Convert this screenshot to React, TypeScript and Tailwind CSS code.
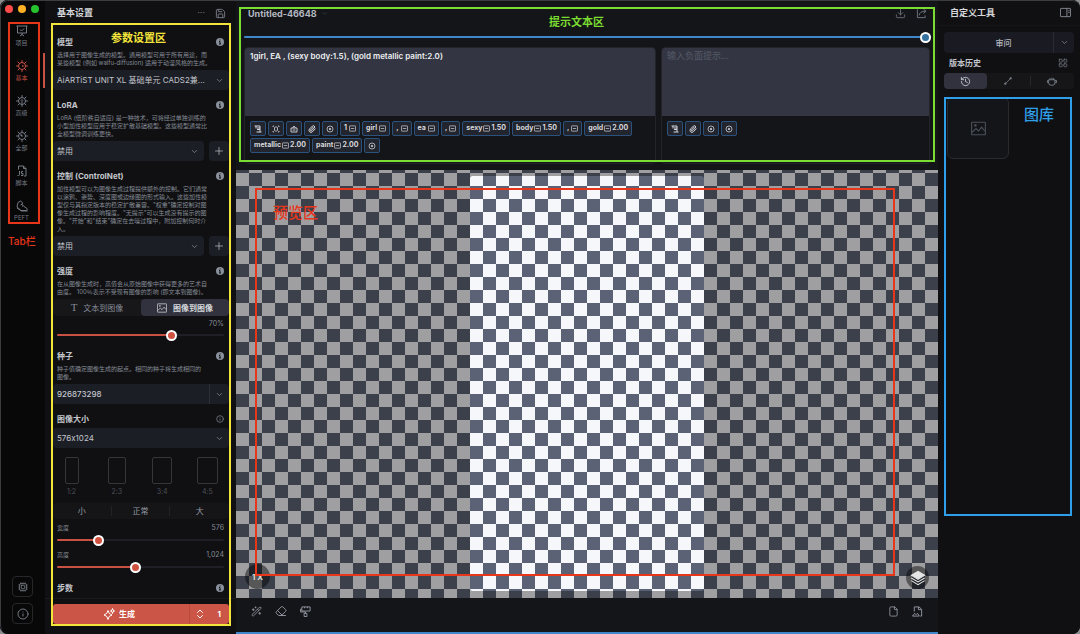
import { useState } from "react";
import type { ReactNode } from "react";
import clsx from "clsx";
import {
  ChevronDown,
  ChevronsUpDown,
  Cpu,
  Download,
  Eraser,
  File,
  History,
  Info,
  LayoutGrid,
  Paperclip,
  Plus,
  Save,
  WandSparkles,
} from "lucide-react";

const ProjectIcon = () => (
  <svg viewBox="0 0 24 24" className="h-3 w-3" fill="none" stroke="currentColor" strokeWidth="2">
    <path d="M1 2h22M3 2v14h18V2M8 9l3 3 5-5M12 16v4M8 22l4-3 4 3" />
  </svg>
);

const GearIcon = ({ children }: { children?: ReactNode }) => (
  <svg viewBox="0 0 24 24" className="h-3 w-3" fill="none" stroke="currentColor" strokeWidth="2">
    <circle cx="12" cy="12" r="7" />
    <path
      d="M12 5V1M12 23v-4M5 12H1M23 12h-4M7 7 4 4M20 20l-3-3M7 17l-3 3M20 4l-3 3"
      strokeLinecap="round"
    />
    {children}
  </svg>
);

const ScriptIcon = () => (
  <svg viewBox="0 0 24 24" className="h-3 w-3" fill="none" stroke="currentColor" strokeWidth="2">
    <path d="M5 9V2h10l5 5v15h-4M15 2v5h5" />
    <path d="M7 12v7q0 2-2 2H3M14 13h-3v4h3v4h-4" />
  </svg>
);

const ShoeIcon = () => (
  <svg viewBox="0 0 24 24" className="h-3 w-3" fill="none" stroke="currentColor" strokeWidth="2">
    <path d="M2 14 4 5l5-3 4 3-1 4 4 4 5 3q2 2 1 5H10Z" />
    <path d="m2 16 9 6h12M9 10l4-2M12 13l3-2" />
  </svg>
);

const PictureIcon = ({ className }: { className?: string }) => (
  <svg viewBox="0 0 24 24" className={className} fill="none" stroke="currentColor" strokeWidth="1.8">
    <rect x="1" y="2" width="22" height="20" rx="1" />
    <path d="m2 18 6-6 4 4 5-6 5 6" />
    <circle cx="7" cy="7" r="1.2" />
  </svg>
);

const SparkIcon = () => (
  <svg viewBox="0 0 24 24" className="h-3 w-3" fill="none" stroke="currentColor" strokeWidth="2">
    <path d="M10 5q1 7 8 9-7 1-8 9-1-8-8-9 7-2 8-9Z" />
    <path d="M19 1q0 4 4 5-4 0-4 5 0-5-4-5 4-1 4-5Z" />
  </svg>
);

const ShareIcon = () => (
  <svg viewBox="0 0 24 24" className="h-[11px] w-[11px]" fill="none" stroke="currentColor" strokeWidth="2">
    <path d="M3 3v18h17v-5M7 16q1-9 13-9M16 2l6 5-6 5" />
  </svg>
);

const PanelIcon = () => (
  <svg viewBox="0 0 24 24" className="h-[11px] w-[11px]" fill="none" stroke="currentColor" strokeWidth="2">
    <rect x="1" y="3" width="22" height="18" rx="1" />
    <path d="M15 3v18M18 8h3M18 12h3" />
  </svg>
);

const BrushIcon = () => (
  <svg viewBox="0 0 24 24" className="h-[11px] w-[11px]" fill="none" stroke="currentColor" strokeWidth="2">
    <path d="M4 2h18v9H4ZM4 7H1v6h11v3M9 16h6v7H9ZM10 2v3M16 2v3" />
  </svg>
);

const FilePictureIcon = () => (
  <svg viewBox="0 0 24 24" className="h-[11px] w-[11px]" fill="none" stroke="currentColor" strokeWidth="2">
    <path d="M5 12V2h10l6 5v15h-3M14 2v6h6" />
    <path d="m1 22 5-6 3 3 3-3 4 6Z" />
  </svg>
);

const LayersIcon = () => (
  <svg viewBox="0 0 24 24" className="h-4 w-4" fill="none" stroke="#e5e5e5" strokeWidth="1.6">
    <path d="M12 2 2 8l10 6 10-6Z" fill="#e5e5e5" />
    <path d="m2 12 10 6 10-6M2 16l10 6 10-6" />
  </svg>
);

const PathIcon = () => (
  <svg viewBox="0 0 24 24" className="h-2 w-2" fill="currentColor" stroke="currentColor" strokeWidth="2.5">
    <path d="M5 19 19 5" />
    <circle cx="4" cy="20" r="2.5" />
    <circle cx="20" cy="4" r="2.5" />
  </svg>
);

const CupIcon = () => (
  <svg viewBox="0 0 24 24" className="h-[10px] w-[10px]" fill="none" stroke="currentColor" strokeWidth="2.4">
    <path d="M4 9h15v7q0 6-5 6H9q-5 0-5-6ZM4 11H1v5h3M19 11h4v5h-4M7 9V5M12 9V4M16 9V5" />
  </svg>
);

const InfoDot = () => (
  <svg viewBox="0 0 16 16" className="h-2 w-2">
    <circle cx="8" cy="8" r="8" fill="#8a909c" />
    <path d="M8 3v2M6 7h2v5M6 12h4" stroke="#101012" strokeWidth="2" fill="none" />
  </svg>
);

const ScrollGlyph = () => (
  <svg viewBox="0 0 16 16" className="h-2 w-2" fill="none" stroke="currentColor" strokeWidth="2">
    <path d="M1 2h11v12M4 2v5M6 6h6M6 9h6M5 14h10" />
  </svg>
);

const FrameGlyph = () => (
  <svg viewBox="0 0 16 16" className="h-2 w-2" fill="none" stroke="currentColor" strokeWidth="1.6">
    <path d="M2 4V2h2M12 2h2v2M14 12v2h-2M4 14H2v-2" />
    <rect x="5" y="4" width="6" height="8" rx="2" />
  </svg>
);

const BagGlyph = () => (
  <svg viewBox="0 0 16 16" className="h-2 w-2" fill="none" stroke="currentColor" strokeWidth="1.8">
    <path d="M2 6h12v8H2ZM5 6l3-4 3 4M5 10h6" />
  </svg>
);

const TargetGlyph = () => (
  <svg viewBox="0 0 16 16" className="h-2 w-2" fill="none" stroke="currentColor" strokeWidth="1.5">
    <circle cx="8" cy="8" r="6" />
    <circle cx="8" cy="8" r="1.5" fill="currentColor" />
  </svg>
);

const WeightGlyph = () => (
  <svg viewBox="0 0 16 16" className="h-[7px] w-[7px]" fill="none" stroke="currentColor" strokeWidth="1.6">
    <rect x="1" y="2" width="14" height="12" rx="1" />
    <path d="M4 8h8" />
  </svg>
);

const TABS = [
  { label: "项目", icon: <ProjectIcon /> },
  {
    label: "基本",
    icon: (
      <GearIcon>
        <path d="M12 12h3" strokeWidth="3" />
      </GearIcon>
    ),
  },
  {
    label: "高级",
    icon: (
      <GearIcon>
        <path d="M12 18v-7M10 11l2-2 2 2" />
      </GearIcon>
    ),
  },
  {
    label: "全部",
    icon: (
      <GearIcon>
        <path d="m9 9 4 4" strokeWidth="3" />
      </GearIcon>
    ),
  },
  { label: "脚本", icon: <ScriptIcon /> },
  { label: "PEFT", icon: <ShoeIcon /> },
];

const Rail = () => {
  const [active, setActive] = useState("基本");

  return (
    <nav className="relative flex w-[45px] shrink-0 flex-col bg-[#080809] text-[#737983]">
      <div className="flex h-[18px] items-center gap-[5px] pl-[5px]">
        <span className="h-2 w-2 rounded-full bg-[#fc4b48]" />
        <span className="h-2 w-2 rounded-full bg-[#fdb124]" />
        <span className="h-2 w-2 rounded-full bg-[#26c32f]" />
      </div>
      <div className="flex flex-col">
        {TABS.map((tab) => (
          <button
            key={tab.label}
            type="button"
            onClick={() => setActive(tab.label)}
            className={clsx(
              "flex h-[35px] flex-col items-center justify-center gap-[2px] border-r-2 text-[6px] leading-[8px]",
              active === tab.label ? "border-[#c85144] text-[#c85144]" : "border-transparent"
            )}
          >
            {tab.icon}
            {tab.label}
          </button>
        ))}
      </div>
      <div className="mt-auto flex flex-col items-center gap-[6px] pb-[10px]">
        <button
          type="button"
          aria-label="设备"
          className="flex h-[21px] w-[21px] items-center justify-center rounded border border-[#27272b]"
        >
          <Cpu size={10} />
        </button>
        <button
          type="button"
          aria-label="关于"
          className="flex h-[21px] w-[21px] items-center justify-center rounded border border-[#27272b]"
        >
          <Info size={12} />
        </button>
      </div>
      <div className="pointer-events-none absolute top-[22px] right-[5px] left-2 h-[202px] border-2 border-[#e8361b]" />
      <p className="absolute top-[233px] left-2 text-[10px] leading-4 font-medium whitespace-nowrap text-[#e8361b]">
        Tab栏
      </p>
    </nav>
  );
};

type SectionProps = {
  title: string;
  description?: string;
  outlined?: boolean;
  children?: ReactNode;
};

const Section = ({ title, description, outlined, children }: SectionProps) => (
  <section className="flex flex-col gap-[3px]">
    <div className="flex h-3 items-center justify-between pr-[12px] pl-1">
      <h2 className="text-[8px] leading-3 font-bold text-[#c3c6cc]">{title}</h2>
      {outlined ? <Info size={8} className="text-[#8a909c]" /> : <InfoDot />}
    </div>
    {description && (
      <p className="pl-1 text-[6px] leading-[8px] whitespace-pre text-[#858b96]">{description}</p>
    )}
    {children}
  </section>
);

const SelectBox = ({ label, value, add }: { label: string; value: string; add?: boolean }) => (
  <div className="flex gap-[5px] pr-[7px]">
    <div className="relative min-w-0 flex-1">
      <select
        aria-label={label}
        className="block h-5 w-full appearance-none rounded bg-[#1c1e26] pr-5 pl-1 text-[8px] text-[#c3c6cc]"
      >
        <option>{value}</option>
      </select>
      <ChevronDown
        size={9}
        className="pointer-events-none absolute top-[6px] right-[5px] text-[#858b96]"
      />
    </div>
    {add && (
      <button
        type="button"
        aria-label="添加"
        className="flex h-5 w-5 items-center justify-center rounded bg-[#1c1e26] text-[#b4b8c0]"
      >
        <Plus size={12} strokeWidth={1.5} />
      </button>
    )}
  </div>
);

type SliderProps = {
  label: string;
  value: number;
  min: number;
  max: number;
};

const Slider = ({ label, value, min, max }: SliderProps) => {
  const [current, setCurrent] = useState(value);
  const percent = ((current - min) / (max - min)) * 100;

  return (
    <div className="flex h-3 items-center pr-[12px] pl-1">
      <input
        type="range"
        aria-label={label}
        min={min}
        max={max}
        value={current}
        onChange={(e) => setCurrent(Number(e.target.value))}
        style={{ background: `linear-gradient(to right, #c85144 ${percent}%, #1e1f27 ${percent}%)` }}
        className="h-[2px] w-full appearance-none rounded-full [&::-webkit-slider-thumb]:h-[11px] [&::-webkit-slider-thumb]:w-[11px] [&::-webkit-slider-thumb]:appearance-none [&::-webkit-slider-thumb]:rounded-full [&::-webkit-slider-thumb]:border-[2px] [&::-webkit-slider-thumb]:border-white [&::-webkit-slider-thumb]:bg-[#d0513f]"
      />
    </div>
  );
};

const RATIOS = [
  { label: "1:2", box: "w-[14px]" },
  { label: "2:3", box: "w-[18px]" },
  { label: "3:4", box: "w-5" },
  { label: "4:5", box: "w-[21px]" },
];

const Settings = () => (
  <aside className="relative flex w-[191px] shrink-0 flex-col rounded-l bg-[#101012]">
    <header className="flex h-[26px] shrink-0 items-center pr-[10px] pl-3">
      <h1 className="text-[9px] font-bold text-[#d5d7db]">基本设置</h1>
      <button type="button" aria-label="更多" className="mr-[10px] ml-auto text-[9px] text-[#737983]">
        ···
      </button>
      <button type="button" aria-label="保存" className="text-[#858b96]">
        <Save size={11} strokeWidth={1.8} />
      </button>
    </header>

    <div className="flex min-h-0 flex-1 flex-col gap-[9px] overflow-hidden pt-[10px] pl-2">
      <Section
        title="模型"
        description={"选择用于图像生成的模型。通用模型可用于所有用途，而\n某些模型 (例如 waifu-diffusion) 适用于动漫风格的生成。"}
      >
        <SelectBox label="模型" value="AiARTiST UNIT XL 基础单元 CADS2兼..." />
      </Section>
      <Section
        title="LoRA"
        description={"LoRA (低阶秩自适应) 是一种技术，可将经过单独训练的\n小型加性模型应用于稳定扩散基础模型。这些模型通常比\n全模型微调训练更快。"}
      >
        <SelectBox label="LoRA" value="禁用" add />
      </Section>
      <Section
        title="控制 (ControlNet)"
        description={"加性模型可以为图像生成过程提供额外的控制。它们通常\n以涂鸦、姿势、深度图或边缘图的形式输入。这些加性模\n型仅与其指定版本的稳定扩散兼容。\"权重\"确定控制对图\n像生成过程的影响程度。\"无提示\"可以生成没有提示的图\n像。\"开始\"和\"结束\"确定在去噪过程中，附加控制何时介\n入。"}
      >
        <SelectBox label="控制" value="禁用" add />
      </Section>
      <Section
        title="强度"
        description={"在从图像生成时，高值会从原始图像中获得更多的艺术自\n由度。 100％表示不受现有图像的影响 (即文本到图像)。"}
      >
        <div className="mr-[7px] flex h-[17px] rounded bg-[#17171a] text-[8px]">
          <button type="button" className="flex flex-1 items-center justify-center gap-[6px] text-[#858b96]">
            <span className="font-['Liberation_Serif'] text-[11px]">T</span>
            文本到图像
          </button>
          <button
            type="button"
            className="flex flex-1 items-center justify-center gap-[6px] rounded bg-[#31323e] font-bold text-[#d5d7db]"
          >
            <PictureIcon className="h-[10px] w-[10px]" />
            图像到图像
          </button>
        </div>
        <p className="pr-[12px] text-right text-[7px] leading-[10px] text-[#858b96]">70%</p>
        <div className="-mt-[3px]">
          <Slider label="强度" value={70} min={0} max={100} />
        </div>
      </Section>
      <Section
        title="种子"
        description={"种子值确定图像生成的起点。相同的种子将生成相同的\n图像。"}
      >
        <div className="mr-[7px] flex h-5 overflow-hidden rounded bg-[#1c1e26]">
          <input
            aria-label="种子"
            defaultValue="926873298"
            className="min-w-0 flex-1 pl-1 text-[8px] font-medium text-[#c3c6cc]"
          />
          <button
            type="button"
            aria-label="种子选项"
            className="flex w-5 items-center justify-center border-l border-[#2c2e38] text-[#858b96]"
          >
            <ChevronDown size={9} />
          </button>
        </div>
      </Section>
      <Section title="图像大小" outlined>
        <SelectBox label="图像大小" value="576x1024" />
        <div className="flex flex-col gap-[6px] pt-[6px]">
          <div className="flex justify-between pr-[18px] pl-2">
            {RATIOS.map((ratio) => (
              <button
                key={ratio.label}
                type="button"
                className="flex w-[21px] flex-col items-center gap-[3px] text-[7px] leading-[10px] text-[#4b4f58]"
              >
                <span className={clsx("h-[27px] rounded-[2px] border border-[#34363c]", ratio.box)} />
                {ratio.label}
              </button>
            ))}
          </div>
          <div className="mr-[7px] grid h-4 grid-cols-3 items-center divide-x divide-[#232327] rounded bg-[#151517] text-[8px] leading-[10px] text-[#969ba5]">
            <button type="button">小</button>
            <button type="button">正常</button>
            <button type="button">大</button>
          </div>
        </div>
        <div className="flex flex-col gap-[3px]">
          <div>
            <div className="flex justify-between pr-[12px] pl-1 text-[#858b96]">
              <span className="text-[6px] leading-3">宽度</span>
              <span className="text-[7px] leading-3">576</span>
            </div>
            <Slider label="宽度" value={576} min={128} max={2048} />
          </div>
          <div>
            <div className="flex justify-between pr-[12px] pl-1 text-[#858b96]">
              <span className="text-[6px] leading-3">高度</span>
              <span className="text-[7px] leading-3">1,024</span>
            </div>
            <Slider label="高度" value={1024} min={128} max={2048} />
          </div>
        </div>
      </Section>
      <Section title="步数" />
    </div>

    <footer className="border-t border-[#1a1a1d] pt-[5px] pr-[7px] pb-[10px] pl-2">
      <div className="flex h-5 overflow-hidden rounded-[3px] bg-[#cb5546] text-[8px] font-bold text-white">
        <button type="button" className="flex flex-1 items-center justify-center gap-1 pr-1">
          <SparkIcon />
          生成
        </button>
        <button
          type="button"
          className="flex w-10 items-center justify-between border-l border-[#b94a3d] pr-2 pl-1"
        >
          <ChevronsUpDown size={12} />1
        </button>
      </div>
    </footer>

    <div className="pointer-events-none absolute top-[23px] right-[5px] bottom-[8px] left-[6px] border-2 border-[#f3e43c]" />
    <p className="absolute top-[30px] left-[66px] text-[11px] leading-4 font-bold text-[#f3e43c]">参数设置区</p>
  </aside>
);

const Tag = ({ text, weight, children }: { text?: string; weight?: string; children?: ReactNode }) => (
  <button
    type="button"
    className={clsx(
      "flex h-[15px] min-w-4 items-center justify-center rounded-[2px] border border-[#2b527c] bg-[#23252e] px-[3px] text-[7px] font-bold text-[#d5d7db]",
      weight ? "gap-px" : "gap-[2px]"
    )}
  >
    {text}
    {children ?? <WeightGlyph />}
    {weight}
  </button>
);

const TOKENS = [
  { text: "1" },
  { text: "girl" },
  { text: "," },
  { text: "ea" },
  { text: "," },
  { text: "sexy", weight: "1.50" },
  { text: "body", weight: "1.50" },
  { text: "," },
  { text: "gold", weight: "2.00" },
  { text: "metallic", weight: "2.00" },
  { text: "paint", weight: "2.00" },
];

const Prompts = () => (
  <section className="relative flex h-[170px] shrink-0 flex-col bg-[#131518]">
    <header className="flex h-[27px] items-center gap-1 pr-[11px] pl-3">
      <h1 className="text-[9px] font-bold text-[#b4b8c0]">Untitled-46648</h1>
      <ChevronDown size={7} className="text-[#3f434b]" />
      <button type="button" aria-label="下载" className="ml-auto text-[#737983]">
        <Download size={11} strokeWidth={1.8} />
      </button>
      <button type="button" aria-label="分享" className="ml-[6px] text-[#737983]">
        <ShareIcon />
      </button>
    </header>
    <div className="flex h-5 items-center pr-[7px] pl-2">
      <input
        type="range"
        aria-label="历史"
        defaultValue={100}
        className="h-[2px] w-full appearance-none rounded-full bg-[#3f86cb] [&::-webkit-slider-thumb]:h-[11px] [&::-webkit-slider-thumb]:w-[11px] [&::-webkit-slider-thumb]:appearance-none [&::-webkit-slider-thumb]:rounded-full [&::-webkit-slider-thumb]:border-[2px] [&::-webkit-slider-thumb]:border-white [&::-webkit-slider-thumb]:bg-[#33719f]"
      />
    </div>
    <div className="flex h-[117px] gap-[5px] pr-2 pl-2">
      <div className="flex w-[412px] flex-col overflow-hidden rounded border border-[#22242a]">
        <textarea
          aria-label="提示"
          defaultValue="1girl, EA , (sexy body:1.5), (gold metallic paint:2.0)"
          className="h-[68px] shrink-0 resize-none bg-[#333642] px-[5px] py-[3px] text-[8px] leading-[10px] font-semibold text-[#eceef1]"
        />
        <div className="flex flex-wrap gap-x-[2px] gap-y-[2px] py-[5px] pr-[5px] pl-[5px]">
          <Tag>
            <ScrollGlyph />
          </Tag>
          <Tag>
            <FrameGlyph />
          </Tag>
          <Tag>
            <BagGlyph />
          </Tag>
          <Tag>
            <Paperclip size={8} strokeWidth={3} />
          </Tag>
          <Tag>
            <TargetGlyph />
          </Tag>
          {TOKENS.map((token, i) => (
            <Tag key={i} text={token.text} weight={token.weight} />
          ))}
          <Tag>
            <TargetGlyph />
          </Tag>
        </div>
      </div>
      <div className="flex flex-1 flex-col overflow-hidden rounded border border-[#22242a]">
        <textarea
          aria-label="负面提示"
          placeholder="输入负面提示..."
          className="h-[68px] shrink-0 resize-none bg-[#333642] px-[5px] py-[3px] text-[9px] leading-[10px] placeholder:text-[#565b69]"
        />
        <div className="flex gap-[2px] py-[5px] pl-[5px]">
          <Tag>
            <ScrollGlyph />
          </Tag>
          <Tag>
            <Paperclip size={8} strokeWidth={3} />
          </Tag>
          <Tag>
            <TargetGlyph />
          </Tag>
          <Tag>
            <TargetGlyph />
          </Tag>
        </div>
      </div>
    </div>
    <div className="pointer-events-none absolute top-[7px] right-[3px] bottom-[8px] left-[3px] border-2 border-[#7bdc31]" />
    <p className="absolute top-[14px] left-[313px] text-[11px] leading-4 font-bold text-[#7bdc31]">提示文本区</p>
  </section>
);

const Preview = () => (
  <section className="relative flex min-h-0 flex-1 justify-center bg-[repeating-conic-gradient(#3b404b_0_25%,#9f9ea0_0_50%)] bg-[length:26px_26px] bg-[position:0_3px] pt-[6px] pb-[7px]">
    <div className="w-[234px] rounded-[3px] bg-[repeating-conic-gradient(#5c6276_0_25%,#f6f7fa_0_50%)] bg-[length:26px_26px] bg-[position:0_-3px]" />
    <button
      type="button"
      className="absolute bottom-[9px] left-[9px] h-[25px] w-[25px] rounded-full bg-black/45 text-[8px] font-semibold whitespace-nowrap text-[#e5e5e5]"
    >
      1 X
    </button>
    <button
      type="button"
      aria-label="图层"
      className="absolute right-[9px] bottom-[9px] flex h-[23px] w-[23px] items-center justify-center rounded-full bg-black/45"
    >
      <LayersIcon />
    </button>
    <div className="pointer-events-none absolute top-[18px] right-[43px] bottom-[22px] left-[19px] border-2 border-[#e8361b]" />
    <p className="absolute top-[33px] left-[37px] text-[15px] leading-5 font-medium text-[#e8361b]">预览区</p>
  </section>
);

const Toolbar = () => (
  <footer className="flex h-9 shrink-0 items-center gap-[13px] border-b-2 border-[#3f86cb] bg-[#131518] px-[15px] pb-2 text-[#989da7]">
    <button type="button" aria-label="魔棒">
      <WandSparkles size={11} strokeWidth={1.8} />
    </button>
    <button type="button" aria-label="橡皮擦">
      <Eraser size={12} strokeWidth={1.8} />
    </button>
    <button type="button" aria-label="画笔">
      <BrushIcon />
    </button>
    <button type="button" aria-label="新建" className="ml-auto">
      <File size={11} strokeWidth={1.8} />
    </button>
    <button type="button" aria-label="打开图像">
      <FilePictureIcon />
    </button>
  </footer>
);

const Gallery = () => (
  <aside className="relative flex w-[142px] shrink-0 flex-col bg-[#101012]">
    <header className="flex h-[26px] items-center justify-between border-b border-[#161618] pr-[9px] pl-3">
      <h2 className="text-[9px] font-bold text-[#d5d7db]">自定义工具</h2>
      <button type="button" aria-label="面板" className="text-[#858b96]">
        <PanelIcon />
      </button>
    </header>
    <div className="mx-[6px] mt-[6px] flex h-[21px] rounded bg-[#1a1b22]">
      <button type="button" className="flex-1 pl-[10px] text-[8px] font-medium text-[#b4b8c0]">
        审问
      </button>
      <button
        type="button"
        aria-label="更多工具"
        className="flex w-[21px] items-center justify-center border-l border-[#2a2b33] text-[#858b96]"
      >
        <ChevronDown size={9} />
      </button>
    </div>
    <div className="flex h-5 items-center justify-between pr-3 pl-[11px] text-[#737983]">
      <h3 className="text-[8px] font-bold text-[#c3c6cc]">版本历史</h3>
      <LayoutGrid size={10} strokeWidth={1.8} />
    </div>
    <div className="mx-[6px] grid h-4 grid-cols-3 rounded bg-[#161618] text-[#737983]">
      <button type="button" aria-label="历史" className="flex items-center justify-center rounded bg-[#31323e] text-[#c3c6cc]">
        <History size={11} />
      </button>
      <button type="button" aria-label="路径" className="my-[3px] flex items-center justify-center border-r border-[#27272b]">
        <PathIcon />
      </button>
      <button type="button" aria-label="杯子" className="flex items-center justify-center">
        <CupIcon />
      </button>
    </div>
    <div className="mt-2 ml-[9px] flex h-[62px] w-[62px] items-center justify-center rounded-md border border-[#2a2b31] bg-[#131518] text-[#4b4f58]">
      <PictureIcon className="h-[15px] w-[15px]" />
    </div>
    <div className="pointer-events-none absolute top-[97px] right-2 left-[6px] h-[419px] border-2 border-[#2f9fea]" />
    <p className="absolute top-[105px] left-[86px] text-[15px] leading-5 font-medium text-[#2f9fea]">图库</p>
  </aside>
);

export default function App() {
  return (
    <div className="h-screen bg-[#8a8c90]">
      <main className="relative flex h-full overflow-hidden rounded-lg bg-[#0c0c0d] font-['Inter','Noto_Sans_CJK_SC',sans-serif] [font-feature-settings:'calt'_0]">
        <Rail />
        <Settings />
        <div className="flex min-w-0 flex-1 flex-col">
          <Prompts />
          <Preview />
          <Toolbar />
        </div>
        <Gallery />
        <div className="pointer-events-none absolute inset-0 rounded-lg border-t border-l border-[#3c3d40]" />
      </main>
    </div>
  );
}
